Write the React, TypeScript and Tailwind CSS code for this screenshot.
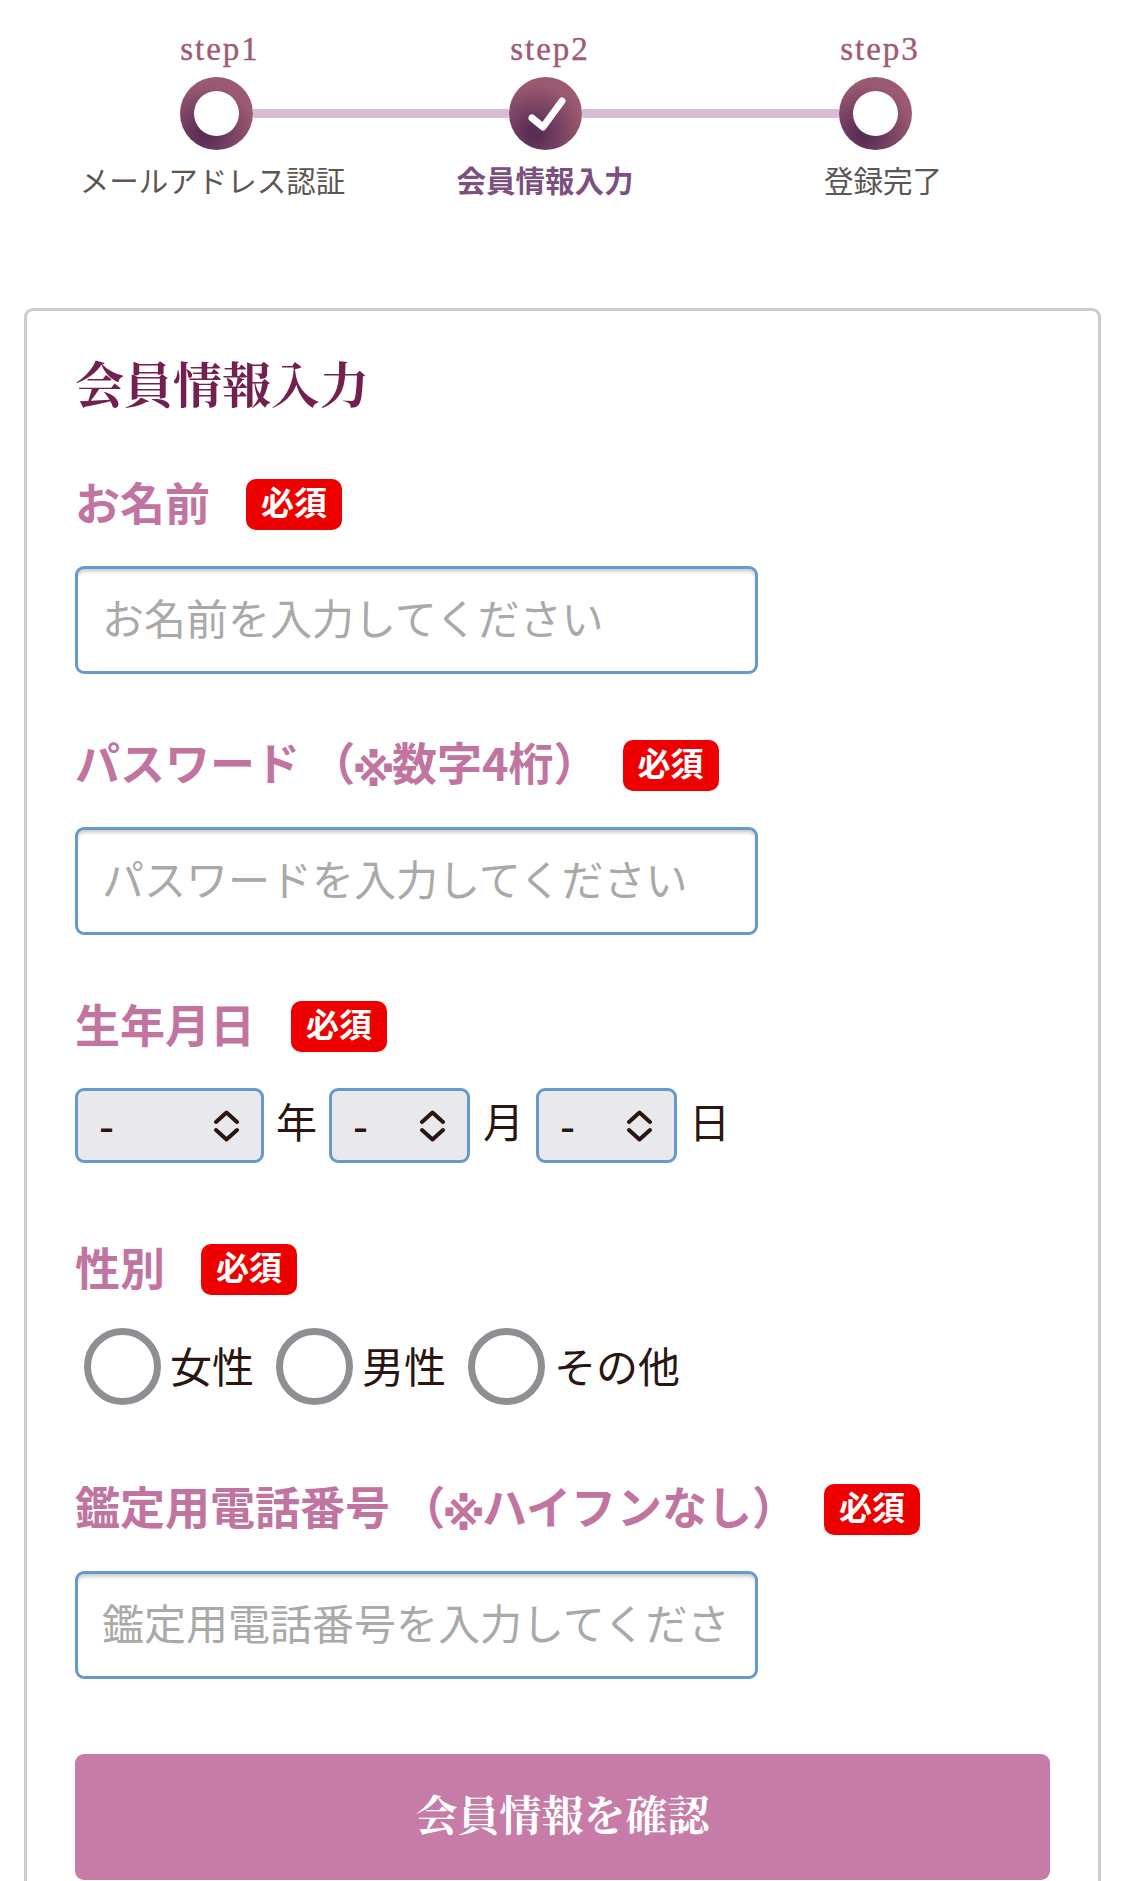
import type { ReactNode } from "react";

const sans = "font-['Noto_Sans_CJK_JP','Noto_Sans_CJK_SC',sans-serif]";
const serif = "font-['Noto_Serif_CJK_JP','Liberation_Serif','Noto_Sans_CJK_JP',serif]";

function Check() {
  return (
    <svg viewBox="0 0 73 73" className="h-[73px] w-[73px]" fill="none" stroke="#fff" strokeWidth="7" strokeLinecap="round" strokeLinejoin="round">
      <path d="M23 41 L34 50 L53 24" />
    </svg>
  );
}

function StepDot({ checked }: { checked?: boolean }) {
  return (
    <div className="flex h-[73px] w-[73px] shrink-0 items-center justify-center rounded-full bg-[radial-gradient(circle_at_35%_78%,#5a2d55_8%,#9c5a72_68%)]">
      {checked ? <Check /> : <div className="h-[45px] w-[45px] rounded-full bg-white" />}
    </div>
  );
}

function Steps() {
  const stepCls = "w-[330px] text-center text-[33px] leading-[36px] text-[#a05a78] font-['Liberation_Serif',serif] tracking-[2px] [-webkit-text-stroke:0.4px_#a05a78]";
  const labelCls = "w-[330px] text-center text-[29.5px] leading-[36px]";
  return (
    <div className="pt-[31px]">
      <div className="flex pl-[55px]">
        <div className={stepCls}>step1</div>
        <div className={stepCls}>step2</div>
        <div className={stepCls}>step3</div>
      </div>
      <div className="mt-[10px] flex items-center pl-[180px]">
        <StepDot />
        <div className="h-[9px] w-[256px] bg-[#d8bdd4]" />
        <StepDot checked />
        <div className="h-[9px] w-[257px] bg-[#d8bdd4]" />
        <StepDot />
      </div>
      <div className={`mt-[11px] flex pl-[50px] ${sans}`}>
        <div className={`${labelCls} pr-[5px] text-[#5c5552]`}>メールアドレス認証</div>
        <div className={`${labelCls} font-bold text-[#7d4f80]`}>会員情報入力</div>
        <div className={`${labelCls} pl-[16px] text-[#5c5552]`}>登録完了</div>
      </div>
    </div>
  );
}

function Mark() {
  return (
    <span className="-mx-[3px] inline-block translate-y-[5px] font-['DejaVu_Sans',sans-serif] text-[44px] font-bold leading-none">※</span>
  );
}

function Label({ children, gap }: { children: ReactNode; gap: string }) {
  return (
    <div className={`flex h-[51px] items-center ${gap}`}>
      <span className="whitespace-pre pb-[5px] text-[45px] font-bold leading-[46px] text-[#c0749f]">{children}</span>
      <span className="flex h-[51px] w-[96px] shrink-0 items-center justify-center rounded-[10px] bg-[#ee0000] pb-[6px] text-[33px] font-bold leading-none text-white">
        必須
      </span>
    </div>
  );
}

function TextInput({ placeholder }: { placeholder: string }) {
  return (
    <input
      type="text"
      placeholder={placeholder}
      className="mb-[-1px] mt-[36px] block h-[108px] w-[683px] rounded-[9px] border-[3px] border-[#6699cc] bg-white px-[24px] pb-[7px] text-[42px] text-[#2a1510] shadow-[inset_0_4px_4px_-2px_rgba(0,0,0,0.25)] outline-none placeholder:text-[#a9a9a9]"
    />
  );
}

function DateSelect({ width }: { width: string }) {
  return (
    <div className={`relative h-[75px] shrink-0 ${width}`}>
      <select className="block h-full w-full appearance-none rounded-[9px] border-[3px] border-[#6699cc] bg-[#e9e9ed] pb-[3px] pl-[21px] text-[42px] font-medium leading-none text-[#2a1510] outline-none">
        <option>-</option>
      </select>
      <svg viewBox="0 0 27 32" className="pointer-events-none absolute right-[24px] top-[22px] h-[32px] w-[27px]" fill="none" stroke="#2a1510" strokeWidth="4" strokeLinecap="round" strokeLinejoin="round">
        <path d="M3 12 L13.5 2.5 L24 12" />
        <path d="M3 20 L13.5 29.5 L24 20" />
      </svg>
    </div>
  );
}

function Radio({ text, width }: { text: string; width: string }) {
  return (
    <label className={`flex items-center ${width}`}>
      <input
        type="radio"
        name="gender"
        className="block h-[77px] w-[77px] shrink-0 appearance-none rounded-full border-[7px] border-[#8e8e93] bg-white"
      />
      <span className="ml-[9px] pb-[3px] text-[42px] leading-[72px] text-[#2a1510]">{text}</span>
    </label>
  );
}

export default function App() {
  return (
    <div className={`h-[1881px] w-[1125px] overflow-hidden bg-white ${sans}`}>
      <Steps />
      <div className="mx-[24px] mt-[111px] rounded-[9px] border-[3px] border-[#cccccc] px-[48px] pb-[60px] pt-[47px]">
        <h1 className={`text-[49px] font-bold leading-[48px] text-[#72204f] ${serif}`}>会員情報入力</h1>

        <div className="mt-[73px]">
          <Label gap="gap-[36px]">お名前</Label>
          <TextInput placeholder="お名前を入力してください" />
        </div>

        <div className="mt-[67px]">
          <Label gap="gap-[24px]">パスワード （<Mark />数字4桁）</Label>
          <TextInput placeholder="パスワードを入力してください" />
        </div>

        <div className="mt-[67px]">
          <Label gap="gap-[36px]">生年月日</Label>
          <div className="mt-[36px] flex items-center text-[41px] text-[#2a1510]">
            <DateSelect width="w-[189px]" />
            <span className="ml-[12px] w-[53px] pb-[10px] leading-[65px]">年</span>
            <DateSelect width="w-[141px]" />
            <span className="ml-[13px] w-[53px] pb-[10px] leading-[65px]">月</span>
            <DateSelect width="w-[141px]" />
            <span className="ml-[12px] pb-[10px] leading-[65px]">日</span>
          </div>
        </div>

        <div className="mt-[81px]">
          <Label gap="gap-[36px]">性別</Label>
          <div className="mt-[33px] flex pl-[9px]">
            <Radio text="女性" width="w-[192px]" />
            <Radio text="男性" width="w-[192px]" />
            <Radio text="その他" width="w-auto" />
          </div>
        </div>

        <div className="mt-[79px]">
          <Label gap="gap-[27px]">鑑定用電話番号 （<Mark />ハイフンなし）</Label>
          <TextInput placeholder="鑑定用電話番号を入力してください" />
        </div>

        <button className={`mt-[76px] flex h-[126px] w-full items-center justify-center rounded-[9px] bg-[#c67ca7] pb-[8px] text-[42px] font-bold text-white ${serif}`}>
          会員情報を確認
        </button>
      </div>
    </div>
  );
}
